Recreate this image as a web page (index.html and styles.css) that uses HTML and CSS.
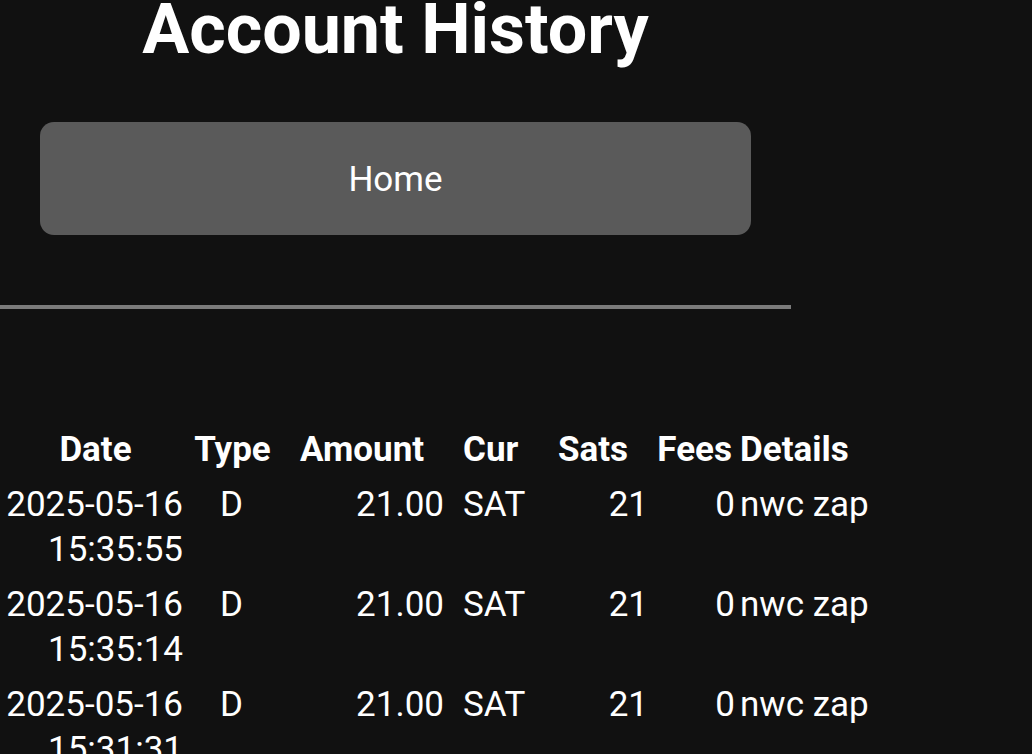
FILE: index.html
```html
<!DOCTYPE html>
<html lang="en">
<head>
    <meta charset="UTF-8">
    <meta name="viewport" content="width=device-width, initial-scale=1.0">
    <title>Account History</title>
    <link rel="stylesheet" href="styles.css">
</head>
<body>
    <div class="page">
        <h1>Account History</h1>

        <button class="home-button" type="button">Home</button>

        <hr class="divider">

        <table class="history">
            <colgroup>
                <col class="w-date">
                <col class="w-type">
                <col class="w-amount">
                <col class="w-cur">
                <col class="w-sats">
                <col class="w-fees">
                <col class="w-details">
            </colgroup>
            <thead>
                <tr>
                    <th class="date">Date</th>
                    <th class="type">Type</th>
                    <th class="amount">Amount</th>
                    <th class="cur">Cur</th>
                    <th class="sats">Sats</th>
                    <th class="fees">Fees</th>
                    <th class="details">Details</th>
                </tr>
            </thead>
            <tbody>
                <tr>
                    <td class="date">2025-05-16 15:35:55</td>
                    <td class="type">D</td>
                    <td class="amount">21.00</td>
                    <td class="cur">SAT</td>
                    <td class="sats">21</td>
                    <td class="fees">0</td>
                    <td class="details">nwc zap</td>
                </tr>
                <tr>
                    <td class="date">2025-05-16 15:35:14</td>
                    <td class="type">D</td>
                    <td class="amount">21.00</td>
                    <td class="cur">SAT</td>
                    <td class="sats">21</td>
                    <td class="fees">0</td>
                    <td class="details">nwc zap</td>
                </tr>
                <tr>
                    <td class="date">2025-05-16 15:31:31</td>
                    <td class="type">D</td>
                    <td class="amount">21.00</td>
                    <td class="cur">SAT</td>
                    <td class="sats">21</td>
                    <td class="fees">0</td>
                    <td class="details">nwc zap</td>
                </tr>
            </tbody>
        </table>
    </div>
</body>
</html>
```

FILE: styles.css
```css
/* General body styling */
body {
    margin: 0;
    padding: 0;
    background: #111111;
    color: #ffffff;
    font-family: Roboto, "Noto Sans", Arial, sans-serif;
    font-size: 35px;
    overflow: hidden;
}

.page {
    width: 791px;
}

/* Header */
h1 {
    margin: 0;
    font-size: 70px;
    font-weight: 700;
    line-height: 58px;
    text-align: center;
}

/* Home button */
.home-button {
    display: flex;
    align-items: center;
    justify-content: center;
    width: 711px;
    height: 113px;
    margin: 64px 0 0 40px;
    border: none;
    border-radius: 14px;
    background: #5a5a5a;
    color: #ffffff;
    font-family: inherit;
    font-size: 35px;
    line-height: normal;
    padding-top: 2px;
}

.divider {
    height: 4px;
    margin: 70px 0 0 0;
    border: none;
    background: #7b7b7b;
}

/* Table styling */
.history {
    table-layout: fixed;
    width: 880px;
    margin-top: 113px;
    border-collapse: collapse;
    line-height: 45px;
}

.history th,
.history td {
    padding: 5px 0;
    vertical-align: top;
}

.history th {
    font-weight: 700;
}

.w-date { width: 191px; }
.w-type { width: 85px; }
.w-amount { width: 176px; }
.w-cur { width: 83px; }
.w-sats { width: 118px; }
.w-fees { width: 87px; }
.w-details { width: 140px; }

/* Column alignment */
.history th.date { text-align: center; }
.history td.date { text-align: right; padding-right: 8px; }

.history th.type { text-align: center; padding-right: 2px; }
.history td.type { text-align: center; padding-right: 4px; }

.history th.amount { text-align: left; padding-left: 24px; }
.history td.amount { text-align: right; padding-right: 8px; }

.history th.cur,
.history td.cur { text-align: left; padding-left: 11px; }

.history th.sats { text-align: left; padding-left: 23px; }
.history td.sats { text-align: right; padding-right: 5px; }

.history th.fees { text-align: right; padding-right: 8px; }
.history td.fees { text-align: right; padding-right: 5px; }

.history th.details,
.history td.details { text-align: left; white-space: nowrap; }
```
